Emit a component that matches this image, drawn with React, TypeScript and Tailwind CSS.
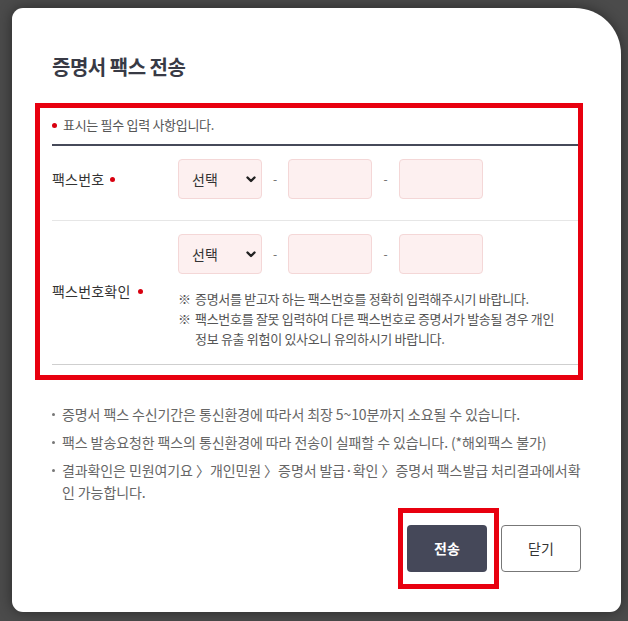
import React from "react";

function RequiredDot() {
  return <span className="inline-block w-[5px] h-[5px] rounded-full bg-[#d8000f] shrink-0" />;
}

function Chevron() {
  return (
    <svg width="10" height="7" viewBox="0 0 10 7" fill="none" className="shrink-0">
      <path d="M1.5 1.5 L5 5 L8.5 1.5" stroke="#222" strokeWidth="2.4" strokeLinecap="round" strokeLinejoin="round" />
    </svg>
  );
}

function FaxFields() {
  return (
    <div className="flex items-center">
      <div className="w-[84px] h-[40px] rounded-[4px] border border-[#f4d7d7] bg-[#fdf0f0] flex items-center justify-between pl-[13px] pr-[5px]">
        <span className="text-[14px] text-[#333]">선택</span>
        <Chevron />
      </div>
      <span className="w-[26px] text-center text-[12px] text-[#666]">-</span>
      <div className="w-[84px] h-[40px] rounded-[4px] border border-[#f4d7d7] bg-[#fdf0f0]" />
      <span className="w-[27px] text-center text-[12px] text-[#666]">-</span>
      <div className="w-[84px] h-[40px] rounded-[4px] border border-[#f4d7d7] bg-[#fdf0f0]" />
    </div>
  );
}

function Arrow() {
  return <span className="tracking-[-5px] mr-[2px]">〉</span>;
}

function Bullet() {
  return (
    <span className="w-[10px] shrink-0 pt-[10px]">
      <span className="block w-[3px] h-[3px] rounded-full bg-[#777]" />
    </span>
  );
}

export default function App() {
  return (
    <div className="w-[628px] h-[621px] bg-[#4b4b4b] pt-[8px] pl-[12px] overflow-hidden font-['Noto_Sans_CJK_KR',sans-serif]">
      <div className="relative w-[609px] h-[604px] bg-white rounded-[11px] rounded-tr-[46px] shadow-[0_0_14px_rgba(0,0,0,0.45)] px-[40px] pt-[45px]">
        <h2 className="text-[20px] leading-[28px] font-bold text-[#383a45] tracking-[-0.5px]">증명서 팩스 전송</h2>

        <p className="mt-[34px] flex items-center gap-[6px] text-[13px] leading-[20px] text-[#555] tracking-[-0.3px]">
          <RequiredDot />
          표시는 필수 입력 사항입니다.
        </p>

        <div className="mt-[9px] border-t-2 border-[#464a59]">
          {/* 팩스번호 */}
          <div className="flex items-center border-b border-[#e6e6e6] pt-[13px] pb-[21px]">
            <div className="w-[126px] flex items-center gap-[6px] text-[14px] text-[#333] tracking-[0.2px]">
              팩스번호 <RequiredDot />
            </div>
            <FaxFields />
          </div>

          {/* 팩스번호확인 */}
          <div className="flex items-center border-b border-[#cfcfcf] pt-[13px] pb-[15px]">
            <div className="w-[126px] flex items-center gap-[8px] text-[14px] text-[#333] tracking-[0.2px]">
              팩스번호확인 <RequiredDot />
            </div>
            <div>
              <FaxFields />
              <div className="mt-[15px] text-[13px] leading-[20px] text-[#555] tracking-[-0.3px]">
                <div className="flex">
                  <span className="w-[17px] shrink-0">※</span>
                  <span>증명서를 받고자 하는 팩스번호를 정확히 입력해주시기 바랍니다.</span>
                </div>
                <div className="flex">
                  <span className="w-[17px] shrink-0">※</span>
                  <span className="whitespace-nowrap">
                    팩스번호를 잘못 입력하여 다른 팩스번호로 증명서가 발송될 경우 개인
                    <br />
                    정보 유출 위험이 있사오니 유의하시기 바랍니다.
                  </span>
                </div>
              </div>
            </div>
          </div>
        </div>

        <ul className="mt-[38px] text-[14px] leading-[22px] text-[#666] tracking-[-0.1px]">
          <li className="flex">
            <Bullet />
            <span>증명서 팩스 수신기간은 통신환경에 따라서 최장 5~10분까지 소요될 수 있습니다.</span>
          </li>
          <li className="flex mt-[6px]">
            <Bullet />
            <span>팩스 발송요청한 팩스의 통신환경에 따라 전송이 실패할 수 있습니다. (*해외팩스 불가)</span>
          </li>
          <li className="flex mt-[6px]">
            <Bullet />
            <span className="whitespace-nowrap">
              결과확인은 민원여기요 <Arrow /> 개인민원 <Arrow /> 증명서 발급·확인 <Arrow /> 증명서 팩스발급 처리결과에서확
              <br />
              인 가능합니다.
            </span>
          </li>
        </ul>

        <div className="mt-[22px] flex justify-end gap-[14px]">
          <button type="button" className="w-[80px] h-[47px] rounded-[4px] bg-[#454859] text-white text-[14px] font-bold">
            전송
          </button>
          <button type="button" className="w-[80px] h-[47px] rounded-[4px] border border-[#777] bg-white text-[#333] text-[14px]">
            닫기
          </button>
        </div>

        {/* annotation boxes */}
        <div className="absolute left-[23px] top-[95px] w-[548px] h-[277px] border-[5px] border-[#e8000f] pointer-events-none" />
        <div className="absolute left-[386px] top-[500px] w-[101px] h-[81px] border-[5px] border-[#e8000f] pointer-events-none" />
      </div>
    </div>
  );
}
